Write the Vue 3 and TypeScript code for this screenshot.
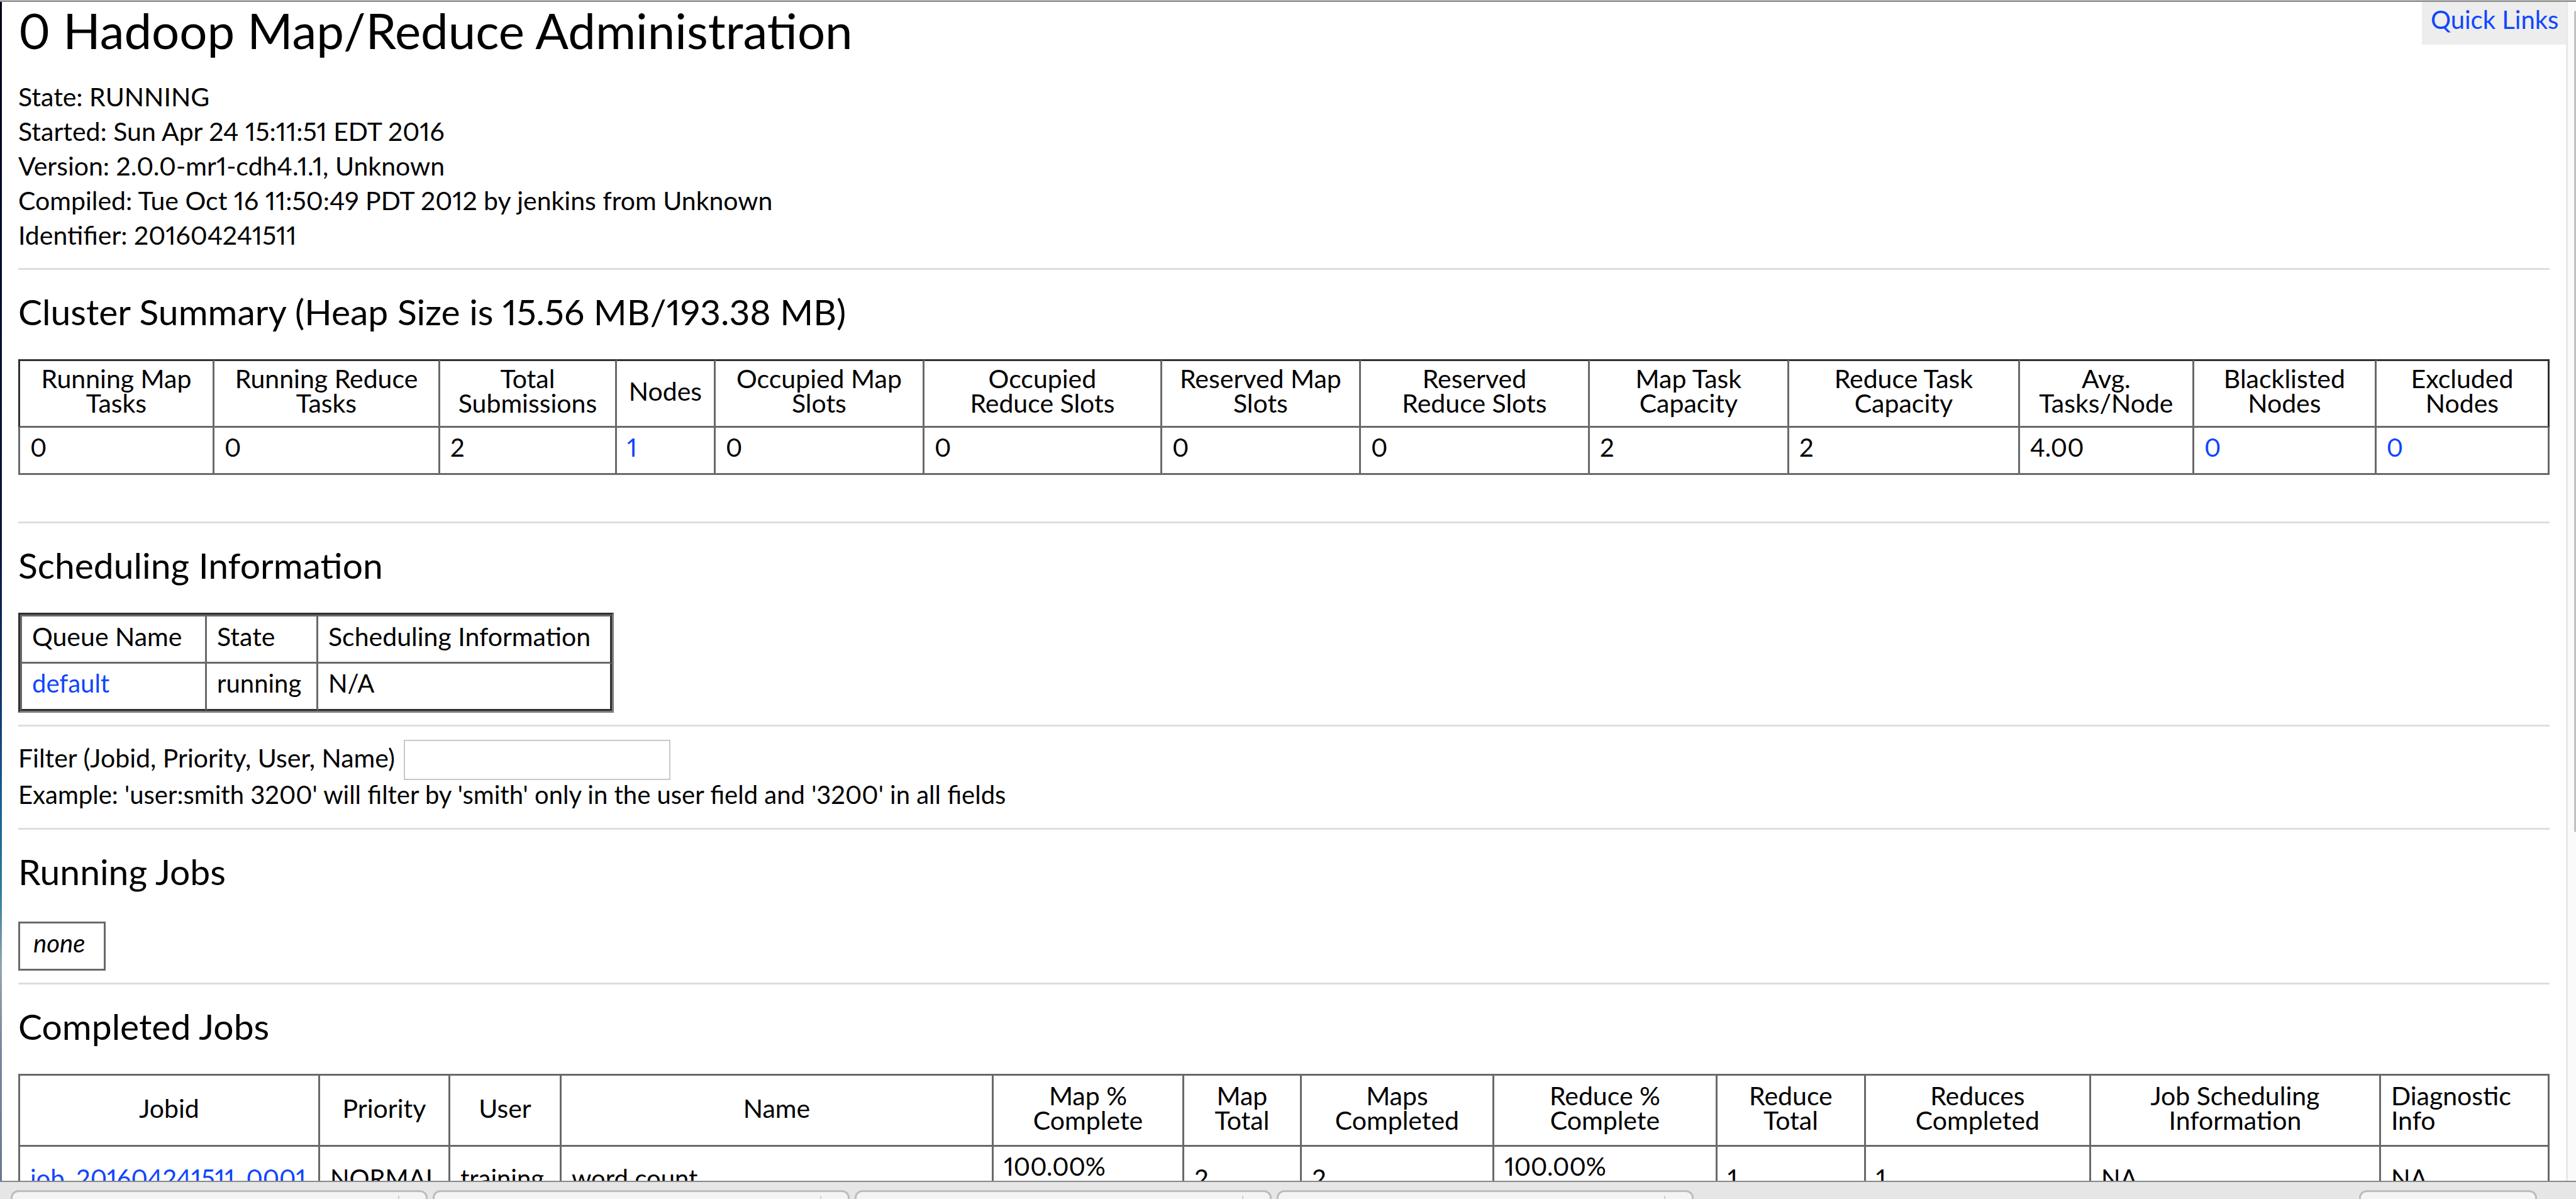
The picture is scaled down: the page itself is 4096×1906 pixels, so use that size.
<script setup lang="ts">
import { ref } from 'vue'

interface Cell {
  text: string
  link?: boolean
  top?: boolean
}

interface Column {
  title: string
  width: number
  cell: Cell
  left?: boolean
}

const details: string[] = [
  'State: RUNNING',
  'Started: Sun Apr 24 15:11:51 EDT 2016',
  'Version: 2.0.0-mr1-cdh4.1.1, Unknown',
  'Compiled: Tue Oct 16 11:50:49 PDT 2012 by jenkins from Unknown',
  'Identifier: 201604241511',
]

const summary: Column[] = [
  { title: 'Running Map\nTasks', width: 312, cell: { text: '0' } },
  { title: 'Running Reduce\nTasks', width: 359, cell: { text: '0' } },
  { title: 'Total\nSubmissions', width: 281, cell: { text: '2' } },
  { title: 'Nodes', width: 157, cell: { text: '1', link: true } },
  { title: 'Occupied Map\nSlots', width: 332, cell: { text: '0' } },
  { title: 'Occupied\nReduce Slots', width: 378, cell: { text: '0' } },
  { title: 'Reserved Map\nSlots', width: 316, cell: { text: '0' } },
  { title: 'Reserved\nReduce Slots', width: 364, cell: { text: '0' } },
  { title: 'Map Task\nCapacity', width: 317, cell: { text: '2' } },
  { title: 'Reduce Task\nCapacity', width: 367, cell: { text: '2' } },
  { title: 'Avg.\nTasks/Node', width: 277, cell: { text: '4.00' } },
  { title: 'Blacklisted\nNodes', width: 290, cell: { text: '0', link: true } },
  { title: 'Excluded\nNodes', width: 275, cell: { text: '0', link: true } },
]

const completed: Column[] = [
  { title: 'Jobid', width: 480, cell: { text: 'job_201604241511_0001', link: true } },
  { title: 'Priority', width: 207, cell: { text: 'NORMAL' } },
  { title: 'User', width: 177, cell: { text: 'training' } },
  { title: 'Name', width: 687, cell: { text: 'word count' } },
  { title: 'Map %\nComplete', width: 303, cell: { text: '100.00%', top: true } },
  { title: 'Map\nTotal', width: 187, cell: { text: '2' } },
  { title: 'Maps\nCompleted', width: 306, cell: { text: '2' } },
  { title: 'Reduce %\nComplete', width: 355, cell: { text: '100.00%', top: true } },
  { title: 'Reduce\nTotal', width: 236, cell: { text: '1' } },
  { title: 'Reduces\nCompleted', width: 358, cell: { text: '1' } },
  { title: 'Job Scheduling\nInformation', width: 461, cell: { text: 'NA' } },
  { title: 'Diagnostic\nInfo', width: 268, cell: { text: 'NA' }, left: true },
]

const share = (columns: Column[], column: Column): string => {
  const total = columns.reduce((sum, c) => sum + c.width, 0)
  return `${(column.width / total) * 100}%`
}

const filter = ref('')
</script>

<template>
  <div class="window">
    <div class="viewport">
      <div class="desktop-edge"></div>
      <main class="page">
        <h1>0 Hadoop Map/Reduce Administration</h1>
        <div class="details">
          <div v-for="line in details" :key="line">{{ line }}</div>
        </div>
        <hr />

        <h2>Cluster Summary (Heap Size is 15.56 MB/193.38 MB)</h2>
        <table class="grid summary">
          <colgroup>
            <col v-for="(c, i) in summary" :key="i" :style="{ width: share(summary, c) }" />
          </colgroup>
          <thead>
            <tr>
              <th v-for="(c, i) in summary" :key="i" scope="col">{{ c.title }}</th>
            </tr>
          </thead>
          <tbody>
            <tr>
              <td v-for="(c, i) in summary" :key="i">
                <a v-if="c.cell.link" href="#">{{ c.cell.text }}</a>
                <template v-else>{{ c.cell.text }}</template>
              </td>
            </tr>
          </tbody>
        </table>
        <hr class="after-summary" />

        <h2>Scheduling Information</h2>
        <table class="grid queues">
          <thead>
            <tr>
              <th scope="col" class="queue-name">Queue Name</th>
              <th scope="col" class="queue-state">State</th>
              <th scope="col" class="queue-info">Scheduling Information</th>
            </tr>
          </thead>
          <tbody>
            <tr>
              <td><a href="#">default</a></td>
              <td>running</td>
              <td>N/A</td>
            </tr>
          </tbody>
        </table>
        <hr class="after-table" />

        <div class="filter">
          <label for="filter">Filter (Jobid, Priority, User, Name)</label>
          <input id="filter" v-model="filter" type="text" />
        </div>
        <p class="example">Example: 'user:smith 3200' will filter by 'smith' only in the user field and '3200' in all fields</p>
        <hr />

        <h2>Running Jobs</h2>
        <table class="grid running">
          <tbody>
            <tr>
              <td><i>none</i></td>
            </tr>
          </tbody>
        </table>
        <hr class="after-table" />

        <h2>Completed Jobs</h2>
        <table class="grid completed">
          <colgroup>
            <col v-for="(c, i) in completed" :key="i" :style="{ width: share(completed, c) }" />
          </colgroup>
          <thead>
            <tr>
              <th v-for="(c, i) in completed" :key="i" scope="col" :class="{ left: c.left }">{{ c.title }}</th>
            </tr>
          </thead>
          <tbody>
            <tr>
              <td v-for="(c, i) in completed" :key="i" :class="{ top: c.cell.top }">
                <a v-if="c.cell.link" href="#">{{ c.cell.text }}</a>
                <template v-else>{{ c.cell.text }}</template>
              </td>
            </tr>
          </tbody>
        </table>
      </main>
      <div class="scroll-track"><div class="scroll-thumb"></div></div>
      <a class="quick-links" href="#">Quick Links</a>
    </div>

    <footer class="downloads">
      <div v-for="n in 4" :key="n" class="download"></div>
      <div class="show-all"></div>
    </footer>
  </div>
</template>

<style>
body {
  margin: 0;
  background: #fff;
}
</style>

<style scoped>
.window {
  display: flex;
  flex-direction: column;
  box-sizing: border-box;
  height: 100vh;
  overflow: hidden;
  border-top: 1px solid #ccc;
  color: #000;
  font-family: Lato, "Open Sans", sans-serif;
  font-size: 41px;
  font-variant-numeric: proportional-nums;
  line-height: 55px;
}

.viewport {
  position: relative;
  display: flex;
  flex: 1;
  min-height: 0;
  overflow: hidden;
  border-top: 2px solid #888;
}

.desktop-edge {
  flex: none;
  width: 3px;
  background: linear-gradient(#000418, #0b1440 46%, #123a70 60%, #1a5f8f 68%, #2a7a9a 75%, #93a5ab 82%, #7b8a9c 88%, #66788f);
}

.page {
  flex: 1;
  min-width: 0;
  padding: 0 26px;
}

h1 {
  margin: 0 0 33px;
  font-size: 78px;
  font-weight: 400;
  line-height: 90px;
}

h2 {
  margin: 33px 0 43px;
  font-size: 57px;
  font-weight: 400;
  line-height: 66px;
}

hr {
  height: 3px;
  margin: 25px 0 0;
  border: 0;
  background: #dedede;
}

hr.after-summary {
  margin-top: 74px;
}

hr.after-table {
  margin-top: 19px;
}

a {
  color: #0f46ff;
  text-decoration: none;
}

.grid {
  border-spacing: 0;
  border-collapse: separate;
}

.grid th,
.grid td {
  padding: 4px 16px 13px;
  border: 0 solid #696969;
  border-width: 0 3px 3px 0;
  font-weight: 400;
  text-align: left;
  white-space: pre;
}

.grid td {
  font-size: 40px;
}

.grid th:first-child,
.grid td:first-child {
  border-left-width: 3px;
}

.summary,
.completed {
  width: 100%;
  table-layout: fixed;
}

.summary th,
.completed th {
  padding: 8px 0 17px;
  border-top-width: 3px;
  line-height: 39px;
  text-align: center;
}

.summary th {
  border-top-color: #303030;
}

.summary th:first-child {
  border-left-color: #303030;
}

.summary th:last-child {
  border-right-color: #303030;
}

.queues {
  border: 3px solid;
  border-color: #303030 #7c7c7c #7c7c7c #303030;
}

.queues th {
  border-top-width: 3px;
}

.queues th:last-child,
.queues td:last-child {
  border-right-color: #303030;
}

.queues td {
  border-bottom-color: #303030;
}

.queue-name {
  width: 259px;
}

.queue-state {
  width: 142px;
}

.queue-info {
  width: 432px;
}

.running {
  margin-top: 47px;
}

.running td {
  width: 95px;
  padding: 4px 17px 13px 21px;
  border-top-width: 3px;
}

.completed th {
  padding: 12px 0 20px;
}

.completed th.left {
  padding-left: 16px;
  text-align: left;
}

.completed td {
  height: 93px;
}

.completed td.top {
  vertical-align: top;
}

.filter {
  display: flex;
  gap: 14px;
  margin-top: 21px;
  line-height: 58px;
}

.filter input {
  box-sizing: border-box;
  width: 424px;
  height: 64px;
  padding: 0 12px;
  border: 2px solid #c8c8c8;
  background: #fff;
  font: inherit;
}

.example {
  margin: 0 0 30px;
  font-size: 40px;
  line-height: 46px;
}

.scroll-track {
  flex: none;
  box-sizing: border-box;
  width: 16px;
  padding-top: 14px;
  border-left: 3px solid #e8e8e8;
  background: #fafafa;
}

.scroll-thumb {
  height: 1306px;
  margin-left: 10px;
  border-radius: 3px 0 0 3px;
  background: #c1c1c1;
}

.quick-links {
  position: absolute;
  top: 0;
  right: 16px;
  box-sizing: border-box;
  width: 229px;
  height: 68px;
  padding: 1px 14px;
  background: #ededed;
  font-size: 40px;
  white-space: nowrap;
}

.downloads {
  display: flex;
  flex: none;
  gap: 8px;
  box-sizing: border-box;
  height: 29px;
  padding: 13px 62px 0 17px;
  border-top: 2px solid #888;
  background: #e6e6e6;
  overflow: hidden;
}

.download,
.show-all {
  box-sizing: border-box;
  height: 40px;
  border: 3px solid #bdbdbd;
  border-radius: 12px;
  background: #f4f4f4;
}

.download {
  width: 663px;
  background: linear-gradient(#d0d0d0, #d0d0d0) right 42px top 6px / 2px 40px no-repeat #f4f4f4;
}

.show-all {
  width: 283px;
  margin-left: auto;
}
</style>
